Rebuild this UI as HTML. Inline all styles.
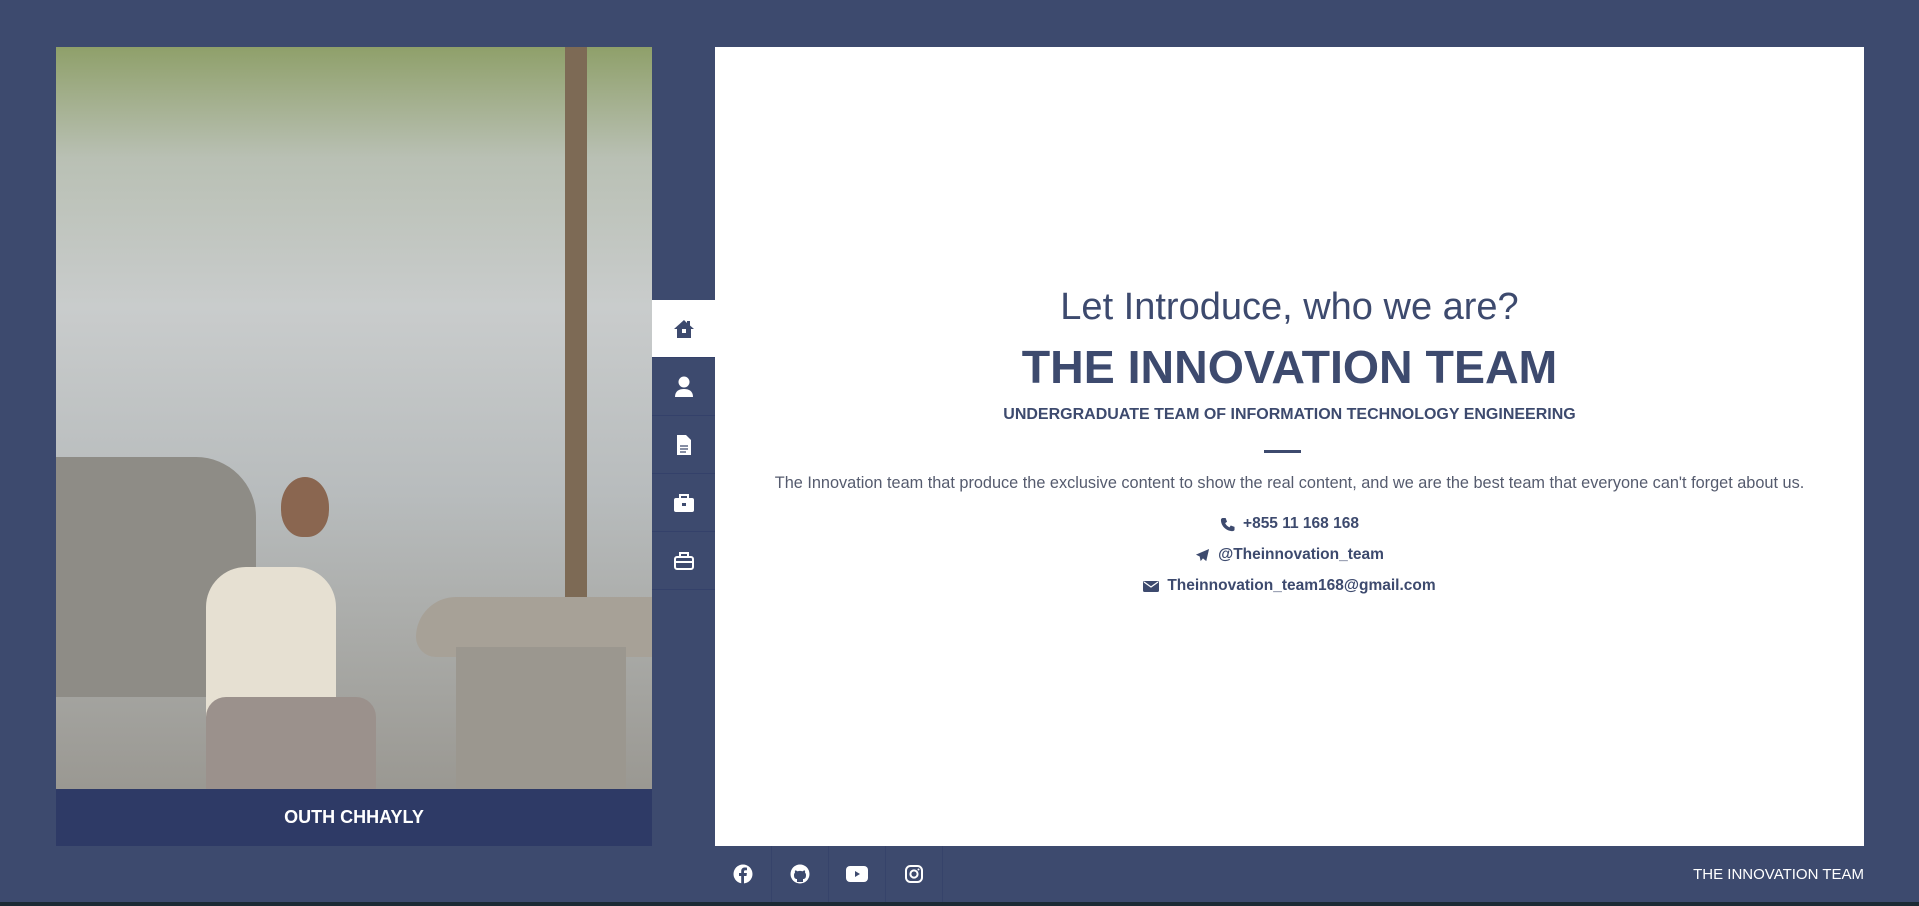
<!DOCTYPE html>
<html><head><meta charset="utf-8"><style>
*{margin:0;padding:0;box-sizing:border-box}
body{width:1919px;height:906px;background:#3d4a6e;position:relative;overflow:hidden;font-family:"Liberation Sans",sans-serif}
.photo{position:absolute;left:56px;top:47px;width:596px;height:742px;background:linear-gradient(180deg,#8fa06a 0%,#b9c0b4 15%,#c9cccc 35%,#b8bcbd 60%,#a9aaa7 80%,#9a9892 100%);overflow:hidden}
.trunk{position:absolute;left:520px;top:0;width:22px;height:600px;background:#7d6a55;transform:translateX(-50%)}
.wall{position:absolute;left:0;top:410px;width:200px;height:240px;background:#8e8c86;border-radius:0 60px 0 0}
.table{position:absolute;left:360px;top:550px;width:236px;height:60px;background:#a7a197;border-radius:40px 0 0 20px}
.ped{position:absolute;left:400px;top:600px;width:170px;height:142px;background:#9b978f}
.man{position:absolute;left:150px;top:520px;width:130px;height:220px;background:#e6e0d2;border-radius:40px 40px 10px 10px}
.legs{position:absolute;left:150px;top:650px;width:170px;height:92px;background:#9b918c;border-radius:20px 20px 0 0}
.head{position:absolute;left:225px;top:430px;width:48px;height:60px;background:#8a6650;border-radius:50% 50% 45% 45%}
.name{position:absolute;left:56px;top:789px;width:596px;height:57px;background:#2e3a66;color:#fff;font-weight:bold;font-size:18px;text-align:center;line-height:57px}
.nav{position:absolute;left:652px;top:300px;width:63px}
.nav div{height:58px;border-bottom:1px solid #34416a;display:flex;align-items:center;justify-content:center}
.nav div.a{background:#fff}
.panel{position:absolute;left:715px;top:47px;width:1149px;height:799px;background:#fff;text-align:center;color:#3d4a6e}
.h1{position:absolute;top:239px;width:100%;font-size:38px;font-weight:normal}
.h2{position:absolute;top:293px;width:100%;font-size:46.5px;font-weight:bold}
.h3{position:absolute;top:359px;width:100%;font-size:16px;font-weight:bold}
.ln{position:absolute;top:403px;left:549px;width:37px;height:3px;background:#3d4a6e}
.p{position:absolute;top:427px;width:100%;font-size:16.3px;color:#555b6e}
.c{position:absolute;width:100%;font-size:15.5px;font-weight:bold;display:flex;justify-content:center;align-items:center;gap:8px}
.foot{position:absolute;left:715px;top:846px;display:flex}
.foot div{width:57px;height:56px;border-right:1px solid #36436a;display:flex;align-items:center;justify-content:center}
.tt{position:absolute;right:55px;top:866px;color:#fff;font-size:15px}
.bar{position:absolute;left:0;top:902px;width:1919px;height:4px;background:#1b2a34}
</style></head><body>
<div class="photo"><div class="wall"></div><div class="trunk"></div><div class="table"></div><div class="ped"></div><div class="man"></div><div class="legs"></div><div class="head"></div></div>
<div class="name">OUTH CHHAYLY</div>
<div class="nav">
<div class="a"><svg width="22" height="20" viewBox="0 0 22 20"><path d="M11 1L1 10h3v9h14v-9h3L17 6.5V2h-3v2z" fill="#3d4a6e"/><rect x="9" y="10" width="4" height="4" fill="#fff"/></svg></div>
<div><svg width="20" height="22" viewBox="0 0 20 22"><circle cx="10" cy="6" r="5.5" fill="#fff"/><path d="M1 21c0-6 4-8 9-8s9 2 9 8z" fill="#fff"/></svg></div>
<div><svg width="16" height="22" viewBox="0 0 16 22"><path d="M1 1h9l5 5v15H1z" fill="#fff"/><path d="M4 12h8M4 15h8M4 18h6" stroke="#3d4a6e" stroke-width="1.3"/></svg></div>
<div><svg width="22" height="20" viewBox="0 0 22 20"><path d="M7 5V2h8v3" stroke="#fff" stroke-width="2" fill="none"/><rect x="1" y="5" width="20" height="14" rx="2" fill="#fff"/><rect x="9" y="10" width="4" height="3" fill="#3d4a6e"/></svg></div>
<div><svg width="22" height="20" viewBox="0 0 22 20"><path d="M7 5V2h8v3" stroke="#fff" stroke-width="2" fill="none"/><rect x="2" y="6" width="18" height="12" rx="2" stroke="#fff" stroke-width="2" fill="none"/><path d="M2 11h18" stroke="#fff" stroke-width="2"/></svg></div>
</div>
<div class="panel">
<div class="h1">Let Introduce, who we are?</div>
<div class="h2">THE INNOVATION TEAM</div>
<div class="h3">UNDERGRADUATE TEAM OF INFORMATION TECHNOLOGY ENGINEERING</div>
<div class="ln"></div>
<div class="p">The Innovation team that produce the exclusive content to show the real content, and we are the best team that everyone can't forget about us.</div>
<div class="c" style="top:468px"><svg width="15" height="15" viewBox="0 0 16 16"><path d="M3 1l3 0 1.5 4-2 1.5c1 2 2.5 3.5 4.5 4.5L11.5 9l4 1.5v3c0 1-1 1.5-2 1.5C6.5 15 1 9.5 1 3c0-1 .8-2 2-2z" fill="#3d4a6e"/></svg>+855 11 168 168</div>
<div class="c" style="top:499px"><svg width="15" height="15" viewBox="0 0 16 16"><path d="M15 1L1 7l4 2 1 5 2.5-3 3.5 3z" fill="#3d4a6e"/></svg>@Theinnovation_team</div>
<div class="c" style="top:530px"><svg width="16" height="13" viewBox="0 0 16 13"><rect x="0" y="1" width="16" height="11" rx="1.5" fill="#3d4a6e"/><path d="M1 2l7 5 7-5" stroke="#fff" stroke-width="1.3" fill="none"/></svg>Theinnovation_team168@gmail.com</div>
</div>
<div class="foot">
<div><svg width="20" height="20" viewBox="0 0 20 20"><circle cx="10" cy="10" r="9.5" fill="#fff"/><path d="M11 20v-8h2.5l.4-3H11V7.5c0-.8.3-1.3 1.4-1.3H14V3.6c-.3 0-1.2-.1-2.2-.1-2.2 0-3.6 1.3-3.6 3.7V9H6v3h2.2v8z" fill="#3d4a6e"/></svg></div>
<div><svg width="20" height="20" viewBox="0 0 20 20"><circle cx="10" cy="10" r="9.5" fill="#fff"/><path d="M7 18v-3c-2 0-3-1-3-4 0-1 .4-1.8 1-2.4-.2-.6-.2-1.4.2-2.2 1 0 1.8.6 2.3 1a7 7 0 0 1 5 0c.5-.4 1.3-1 2.3-1 .4.8.4 1.6.2 2.2.6.6 1 1.4 1 2.4 0 3-1 4-3 4v3z" fill="#3d4a6e"/></svg></div>
<div><svg width="22" height="16" viewBox="0 0 22 16"><rect x="0" y="0" width="22" height="16" rx="4" fill="#fff"/><path d="M9 5l5 3-5 3z" fill="#3d4a6e"/></svg></div>
<div><svg width="18" height="18" viewBox="0 0 18 18"><rect x="1" y="1" width="16" height="16" rx="4.5" stroke="#fff" stroke-width="2" fill="none"/><circle cx="9" cy="9" r="3.6" stroke="#fff" stroke-width="2" fill="none"/><circle cx="13.5" cy="4.5" r="1" fill="#fff"/></svg></div>
</div>
<div class="tt">THE INNOVATION TEAM</div>
<div class="bar"></div>
</body></html>
